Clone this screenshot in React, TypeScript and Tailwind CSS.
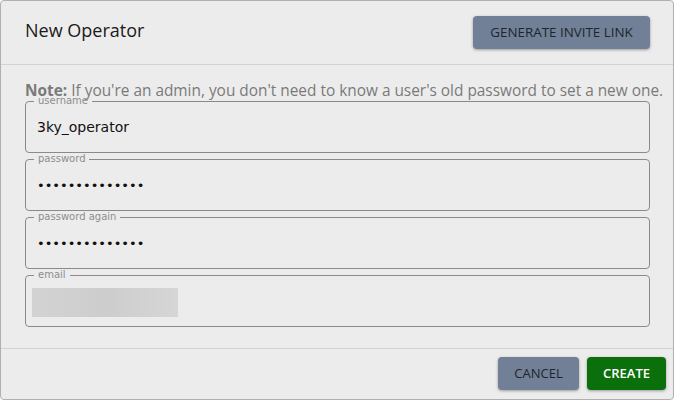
import React from "react";

function Field({ label, children }: { label: string; children: React.ReactNode }) {
  return (
    <fieldset className="border border-[#8a8a8a] rounded-[4px] px-0 pb-[5px] m-0 min-w-0">
      <legend className="ml-[8px] px-[4px] text-[10px] leading-[12px] text-[#8c8c8c] font-[family-name:DejaVu_Sans,sans-serif]">
        {label}
      </legend>
      {children}
    </fieldset>
  );
}

export default function App() {
  return (
    <div className="w-[674px] h-[400px] bg-[#ececec] border border-[#b0b0b0] rounded-[4px] overflow-hidden flex flex-col font-[family-name:Open_Sans,sans-serif]">
      <div className="h-[64px] shrink-0 flex items-center justify-between pl-[24px] pr-[23px] border-b border-[#d2d2d2]">
        <div className="text-[18px] text-[#1a1a1a] -mt-[4px]">New Operator</div>
        <button className="w-[177px] h-[33px] -mt-[1px] rounded-[4px] bg-[#718096] text-[13.4px] text-[#1e2530] shadow-[0_1px_3px_rgba(0,0,0,0.35)]">
          GENERATE INVITE LINK
        </button>
      </div>
      <div className="h-[283px] shrink-0 pl-[24px] pr-[23px] pt-[18px]">
        <p className="text-[15.4px] leading-[16px] text-[#7a7a7a] whitespace-nowrap">
          <span className="font-bold">Note:</span> If you're an admin, you don't need to know a user's old password to set a new one.
        </p>
        <div className="-mt-[4px] flex flex-col">
          <Field label="username">
            <input
              readOnly
              value="3ky_operator"
              className="w-full h-[40px] px-[11px] bg-transparent outline-none text-[14px] text-[#111] font-[family-name:DejaVu_Sans,sans-serif]"
            />
          </Field>
          <Field label="password">
            <input
              readOnly
              type="password"
              value="aaaaaaaaaaaaaa"
              className="w-full h-[40px] px-[11px] bg-transparent outline-none text-[13px] text-[#111] font-[family-name:DejaVu_Sans,sans-serif]"
            />
          </Field>
          <Field label="password again">
            <input
              readOnly
              type="password"
              value="aaaaaaaaaaaaaa"
              className="w-full h-[40px] px-[11px] bg-transparent outline-none text-[13px] text-[#111] font-[family-name:DejaVu_Sans,sans-serif]"
            />
          </Field>
          <Field label="email">
            <div className="h-[40px] pt-[7px] pl-[6px]">
              <div className="w-[146px] h-[29px] bg-gradient-to-r from-[#d3d3d3] via-[#cdcdcd] to-[#d6d6d6]" />
            </div>
          </Field>
        </div>
      </div>
      <div className="flex-1 border-t border-[#d2d2d2] flex justify-end items-start gap-[8px] pt-[8px] pr-[7px]">
        <button className="w-[81px] h-[33px] rounded-[4px] bg-[#718096] text-[13px] text-[#1e2530] shadow-[0_1px_3px_rgba(0,0,0,0.35)]">
          CANCEL
        </button>
        <button className="w-[79px] h-[33px] rounded-[4px] bg-[#0b6f0b] text-[13px] font-semibold text-white shadow-[0_1px_3px_rgba(0,0,0,0.35)]">
          CREATE
        </button>
      </div>
    </div>
  );
}
